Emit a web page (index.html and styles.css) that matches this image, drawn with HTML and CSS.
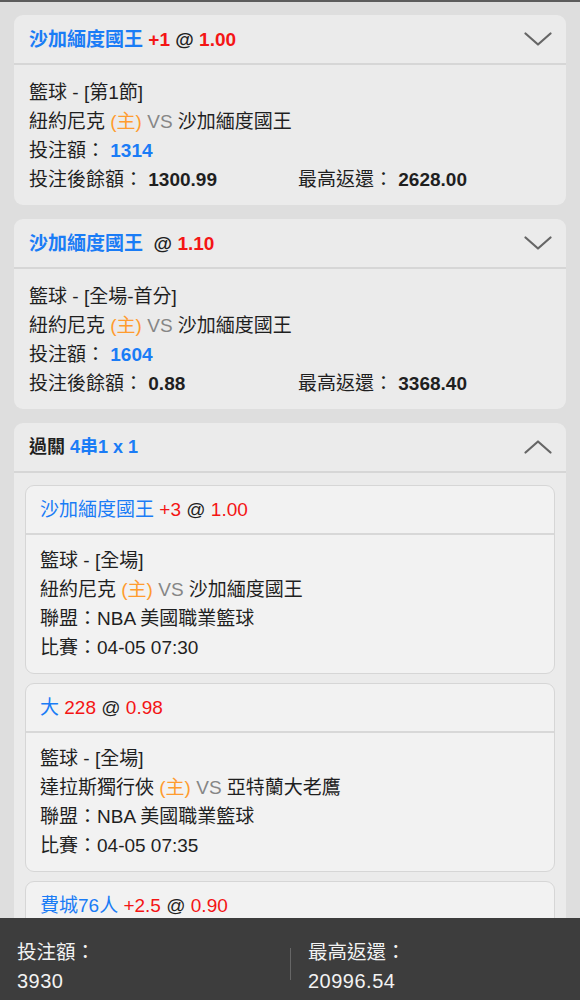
FILE: index.html
```html
<!DOCTYPE html>
<html lang="zh-Hant">
<head>
<meta charset="utf-8">
<title>注單</title>
<link rel="stylesheet" href="styles.css">
</head>
<body>
<div class="page">
  <section class="card">
    <div class="card-head">
      <div class="title bold"><span class="blue">沙加緬度國王</span> <span class="red">+1</span> @ <span class="red">1.00</span></div>
      <svg class="chev" viewBox="0 0 28 14" width="28" height="14"><polyline points="1.5,1.5 14,12.5 26.5,1.5" fill="none" stroke="#666" stroke-width="2.2" stroke-linecap="round" stroke-linejoin="round"/></svg>
    </div>
    <div class="card-body">
      <div>籃球 - [第1節]</div>
      <div>紐約尼克 <span class="orange">(主)</span> <span class="gray">VS</span> 沙加緬度國王</div>
      <div>投注額： <b class="blue">1314</b></div>
      <div class="pair"><div>投注後餘額： <b>1300.99</b></div><div>最高返還： <b>2628.00</b></div></div>
    </div>
  </section>

  <section class="card">
    <div class="card-head">
      <div class="title bold"><span class="blue">沙加緬度國王</span> &nbsp;@ <span class="red">1.10</span></div>
      <svg class="chev" viewBox="0 0 28 14" width="28" height="14"><polyline points="1.5,1.5 14,12.5 26.5,1.5" fill="none" stroke="#666" stroke-width="2.2" stroke-linecap="round" stroke-linejoin="round"/></svg>
    </div>
    <div class="card-body">
      <div>籃球 - [全場-首分]</div>
      <div>紐約尼克 <span class="orange">(主)</span> <span class="gray">VS</span> 沙加緬度國王</div>
      <div>投注額： <b class="blue">1604</b></div>
      <div class="pair"><div>投注後餘額： <b>0.88</b></div><div>最高返還： <b>3368.40</b></div></div>
    </div>
  </section>

  <section class="card">
    <div class="card-head">
      <div class="title bold small">過關 <span class="blue">4串1 x 1</span></div>
      <svg class="chev" viewBox="0 0 28 14" width="28" height="14"><polyline points="1.5,12.5 14,1.5 26.5,12.5" fill="none" stroke="#666" stroke-width="2.2" stroke-linecap="round" stroke-linejoin="round"/></svg>
    </div>
    <div class="parlay">
      <div class="leg">
        <div class="leg-head"><div><span class="blue">沙加緬度國王</span> <span class="red">+3</span> @ <span class="red">1.00</span></div></div>
        <div class="leg-body">
          <div>籃球 - [全場]</div>
          <div>紐約尼克 <span class="orange">(主)</span> <span class="gray">VS</span> 沙加緬度國王</div>
          <div>聯盟：NBA 美國職業籃球</div>
          <div>比賽：04-05 07:30</div>
        </div>
      </div>
      <div class="leg">
        <div class="leg-head"><div><span class="blue">大</span> <span class="red">228</span> @ <span class="red">0.98</span></div></div>
        <div class="leg-body">
          <div>籃球 - [全場]</div>
          <div>達拉斯獨行俠 <span class="orange">(主)</span> <span class="gray">VS</span> 亞特蘭大老鷹</div>
          <div>聯盟：NBA 美國職業籃球</div>
          <div>比賽：04-05 07:35</div>
        </div>
      </div>
      <div class="leg">
        <div class="leg-head"><div><span class="blue">費城76人</span> <span class="red">+2.5</span> @ <span class="red">0.90</span></div></div>
        <div class="leg-body">
          <div>籃球 - [全場]</div>
          <div>費城76人 <span class="orange">(主)</span> <span class="gray">VS</span> 克里夫蘭騎士</div>
          <div>聯盟：NBA 美國職業籃球</div>
          <div>比賽：04-05 08:00</div>
        </div>
      </div>
    </div>
  </section>
</div>

<footer class="summary">
  <div class="sum-col">
    <div>投注額：</div>
    <div class="sum-val">3930</div>
  </div>
  <div class="sum-divider"></div>
  <div class="sum-col right">
    <div>最高返還：</div>
    <div class="sum-val">20996.54</div>
  </div>
</footer>
</body>
</html>
```

FILE: styles.css
```css
* { box-sizing: border-box; }
html, body { margin: 0; padding: 0; }
body {
  background: #dedede;
  font-family: "Liberation Sans", "Noto Sans CJK TC", sans-serif;
  font-size: 19px;
  color: #1f1f1f;
}
b, .bold { font-weight: bold; }
.blue { color: #1a7cf6; }
.red { color: #f41515; }
.orange { color: #ff9c2e; }
.gray { color: #868686; }

.page {
  border-top: 2px solid #5c5c5c;
  padding: 13px 14px 120px;
  display: flex;
  flex-direction: column;
  gap: 14px;
}
.card {
  background: #ebebeb;
  border-radius: 9px;
  overflow: hidden;
}
.card-head {
  height: 50px;
  padding: 0 14px 0 15px;
  display: flex;
  align-items: center;
  justify-content: space-between;
  border-bottom: 2px solid #d6d6d6;
}
.title { line-height: 29px; }
.title.small { font-size: 18px; }
.chev { display: block; }
.card-body {
  padding: 13px 15px 11px;
  line-height: 29px;
}
.pair {
  display: grid;
  grid-template-columns: 269px 1fr;
}
.parlay {
  padding: 12px 11px 12px;
  display: flex;
  flex-direction: column;
  gap: 9px;
}
.leg {
  background: #f2f2f2;
  border: 1px solid #d6d6d6;
  border-radius: 9px;
  overflow: hidden;
}
.leg-head {
  height: 49px;
  padding: 0 14px;
  display: flex;
  align-items: center;
  border-bottom: 2px solid #d8d8d8;
  line-height: 29px;
}
.leg-body {
  padding: 11px 14px 11px;
  line-height: 29px;
}
.summary {
  position: fixed;
  left: 0;
  right: 0;
  bottom: 0;
  height: 82px;
  background: #3d3d3d;
  color: #f2f2f2;
  display: grid;
  grid-template-columns: 290px 1px 1fr;
  align-items: start;
  font-size: 19.5px;
}
.sum-col {
  padding: 20px 0 0 17px;
  line-height: 29px;
}
.sum-val {
  font-size: 20px;
  letter-spacing: 0.5px;
}
.sum-divider {
  margin-top: 30px;
  height: 32px;
  background: #666;
}
```
